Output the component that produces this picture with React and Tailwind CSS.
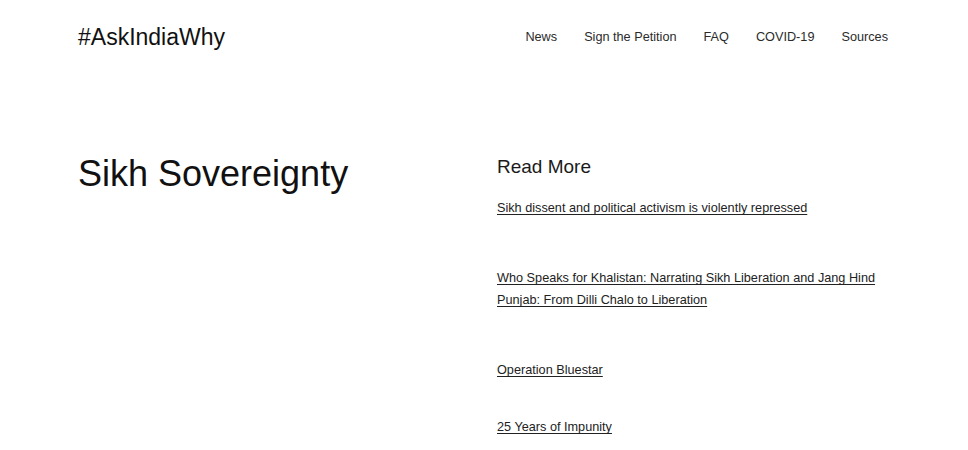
const navItems = ['News', 'Sign the Petition', 'FAQ', 'COVID-19', 'Sources'];

const links = [
  { title: 'Sikh dissent and political activism is violently repressed', gap: '' },
  { title: 'Who Speaks for Khalistan: Narrating Sikh Liberation and Jang Hind Punjab: From Dilli Chalo to Liberation', gap: 'mt-[48px]' },
  { title: 'Operation Bluestar', gap: 'mt-[48px]' },
  { title: '25 Years of Impunity', gap: 'mt-[35px]' },
];

export default function App() {
  return (
    <div className="min-h-screen bg-white text-[#1f1f1f] font-['Liberation_Sans',Arial,sans-serif]">
      <div className="pl-[78px] pr-[80px]">
        <header className="flex items-center justify-between pt-[24px]">
          <a href="#" className="text-[23px] leading-[1.15] text-[#111]">#AskIndiaWhy</a>
          <nav className="flex items-center gap-[27px] text-[12.7px] leading-[1.15] text-[#2b2b2b] mt-[1px]">
            {navItems.map((item) => (
              <a key={item} href="#">{item}</a>
            ))}
          </nav>
        </header>

        <main className="grid grid-cols-[419px_1fr] mt-[104px]">
          <h1 className="text-[36px] leading-[1.15] text-[#111] mt-[-1px]">Sikh Sovereignty</h1>
          <div className="pt-[2px]">
            <h2 className="text-[19px] leading-[1.15] text-[#1a1a1a]">Read More</h2>
            <ul className="mt-[19px] text-[12.7px] leading-[22px] text-[#222]">
              {links.map((link) => (
                <li key={link.title} className={link.gap}>
                  <a href="#" className="underline underline-offset-[2px]">{link.title}</a>
                </li>
              ))}
            </ul>
          </div>
        </main>
      </div>
    </div>
  );
}
